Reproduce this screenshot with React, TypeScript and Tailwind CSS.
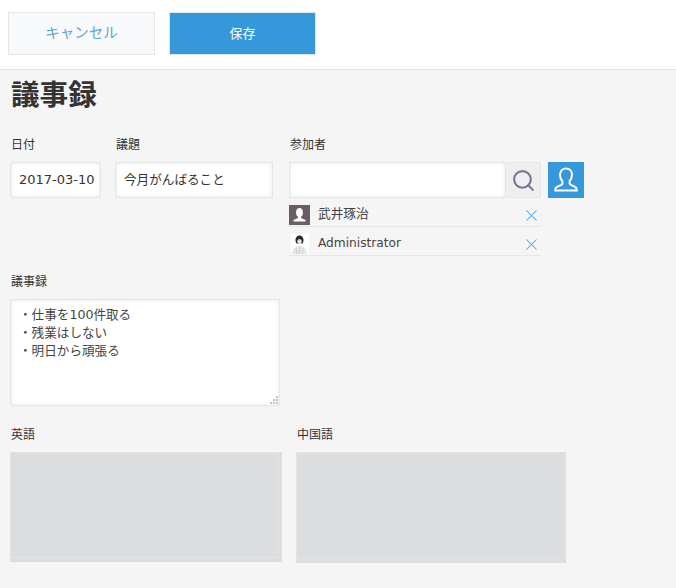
import * as React from 'react';
import { Search, X } from 'lucide-react';

const labelClass = 'h-[18px] text-[12px] leading-[18px] text-[#333]';
const inputClass = 'h-9 border border-[#e3e7e8] bg-white shadow-[inset_0_0_4px_#e6e8e8] leading-[34px] text-[#333]';

function UserIcon() {
  return (
    <svg viewBox="0 0 36 36" className="h-9 w-9" fill="none" stroke="#fff" strokeWidth="2">
      <path d="M18 6.500c-3.600 0-6 2.800-6 6.600 0 2.600 1 4.700 2.400 6.200v2.200c0 .8-.5 1.200-1.400 1.600l-3.600 1.500c-1.400.6-2.100 1.500-2.100 2.800v1.100h21.400v-1.100c0-1.300-.7-2.200-2.100-2.800L23 22.900c-.9-.4-1.400-.8-1.400-1.600v-2.200c1.400-1.500 2.400-3.600 2.400-6.200 0-3.800-2.400-6.400-6-6.400z" />
    </svg>
  );
}

function AvatarTakei() {
  return (
    <svg viewBox="0 0 21 20" className="h-5 w-[21px]">
      <rect width="21" height="20" fill="#6a5d63" />
      <ellipse cx="10.500" cy="7.500" rx="3.400" ry="4.500" fill="#fff" />
      <path d="M9 11h3v2l4.500 2v1.500h-12V15L9 13z" fill="#fff" />
    </svg>
  );
}

function AvatarAdmin() {
  return (
    <svg viewBox="0 0 21 20" className="h-5 w-[21px]">
      <rect x="2" width="18" height="20" fill="#fff" />
      <path d="M6.500 6c0-3 1.800-4.500 4-4.500s4 1.500 4 4.500c0 1.500-.5 2.500-1 3.500h-6c-.5-1-1-2-1-3.500z" fill="#2b2b2b" />
      <ellipse cx="10.500" cy="7.500" rx="2.200" ry="2.600" fill="#e9e4e1" />
      <path d="M3 20c0-5 3-8 7.500-8s7.500 3 7.500 8z" fill="#e6e9e6" />
      <path d="M10.500 12v8M7 14l1 6M14 14l-1 6" stroke="#c9cfca" strokeWidth="1" />
    </svg>
  );
}

function Member({ name, avatar, textClass }: { name: string; avatar: React.ReactNode; textClass: string }) {
  return (
    <div className="flex h-[29px] w-[252px] items-end border-b border-[#e3e7e8] pb-px">
      <div className="h-5 w-[21px]">{avatar}</div>
      <span className={`ml-2 mb-[1px] leading-[20px] text-[#444] ${textClass}`}>{name}</span>
      <X className="ml-auto mr-0 h-[19px] w-[19px] text-[#4ba6e0]" strokeWidth={1.3} />
    </div>
  );
}

function DisabledBox({ label, width, height, inner }: { label: string; width: string; height: string; inner: string }) {
  return (
    <div className={width}>
      <div className={`${labelClass} ml-px mb-2`}>{label}</div>
      <div className={`${height} bg-[#dcdddf]`}>
        <div className={`${inner} border border-[#e3e4e6] bg-[#dcdddf]`} />
      </div>
    </div>
  );
}

export default function App() {
  return (
    <div className="h-[588px] w-[676px] overflow-hidden bg-[#f5f5f5] font-['DejaVu_Sans','Noto_Sans_CJK_JP',sans-serif]">
      {/* Action bar */}
      <div className="flex h-[70px] gap-[14px] border-b border-[#e3e3e3] bg-white pl-2 pt-3">
        <button className="h-[43px] w-[147px] border border-[#e3e7e8] bg-[#f7f9fa] text-[14.500px] text-[#5ba5d9]">
          キャンセル
        </button>
        <button className="h-[43px] w-[147px] border border-[#e3e7e8] bg-[#3498db] text-[13px] text-white">
          保存
        </button>
      </div>

      <div className="pl-[10px]">
        <h1 className="ml-px mt-[7px] h-[34px] text-[28.600px] font-bold leading-[36px] text-[#333]">議事録</h1>

        {/* First row */}
        <div className="mt-[25px] flex">
          <div className="w-[91px]">
            <div className={`${labelClass} ml-px mb-2`}>日付</div>
            <div className={`${inputClass} pl-2 text-[13px]`}>2017-03-10</div>
          </div>
          <div className="ml-[14px] w-[158px]">
            <div className={`${labelClass} ml-px mb-2`}>議題</div>
            <div className={`${inputClass} pl-2 text-[12.600px]`}>今月がんばること</div>
          </div>
          <div className="ml-4">
            <div className={`${labelClass} ml-px mb-2`}>参加者</div>
            <div className="flex">
              <div className={`${inputClass} w-[216px] border-r-0`} />
              <div className="flex h-9 w-9 items-center justify-center border border-[#e3e7e8] bg-[#efefef]">
                <Search className="h-[25px] w-[25px] text-[#77779a]" strokeWidth={2} />
              </div>
              <div className="ml-[7px] h-9 w-9 bg-[#3498db]">
                <UserIcon />
              </div>
            </div>
            <div>
              <Member name="武井琢治" avatar={<AvatarTakei />} textClass="text-[12.700px]" />
              <Member name="Administrator" avatar={<AvatarAdmin />} textClass="text-[12.200px]" />
            </div>
          </div>
        </div>

        {/* Minutes */}
        <div className="mt-[17px]">
          <div className={`${labelClass} ml-px mb-2`}>議事録</div>
          <div className="relative h-[107px] w-[270px] whitespace-pre-line border border-[#e3e7e8] bg-white pl-2 pt-[6px] text-[12.600px] leading-[18px] text-[#444] shadow-[inset_0_0_4px_#e6e8e8]">
            {'・仕事を100件取る\n・残業はしない\n・明日から頑張る'}
            <svg viewBox="0 0 9 9" className="absolute bottom-0 right-0 h-[9px] w-[9px]" fill="#c4c4c4">
              <rect x="6" y="0" width="2" height="2" />
              <rect x="3" y="3" width="2" height="2" />
              <rect x="6" y="3" width="2" height="2" />
              <rect x="0" y="6" width="2" height="2" />
              <rect x="3" y="6" width="2" height="2" />
              <rect x="6" y="6" width="2" height="2" />
            </svg>
          </div>
        </div>

        {/* Disabled fields */}
        <div className="mt-5 flex gap-[14px]">
          <DisabledBox label="英語" width="w-[272px]" height="h-[110px]" inner="h-[106px] w-[269px]" />
          <DisabledBox label="中国語" width="w-[270px]" height="h-[111px]" inner="h-[107px] w-[269px]" />
        </div>
      </div>
    </div>
  );
}
